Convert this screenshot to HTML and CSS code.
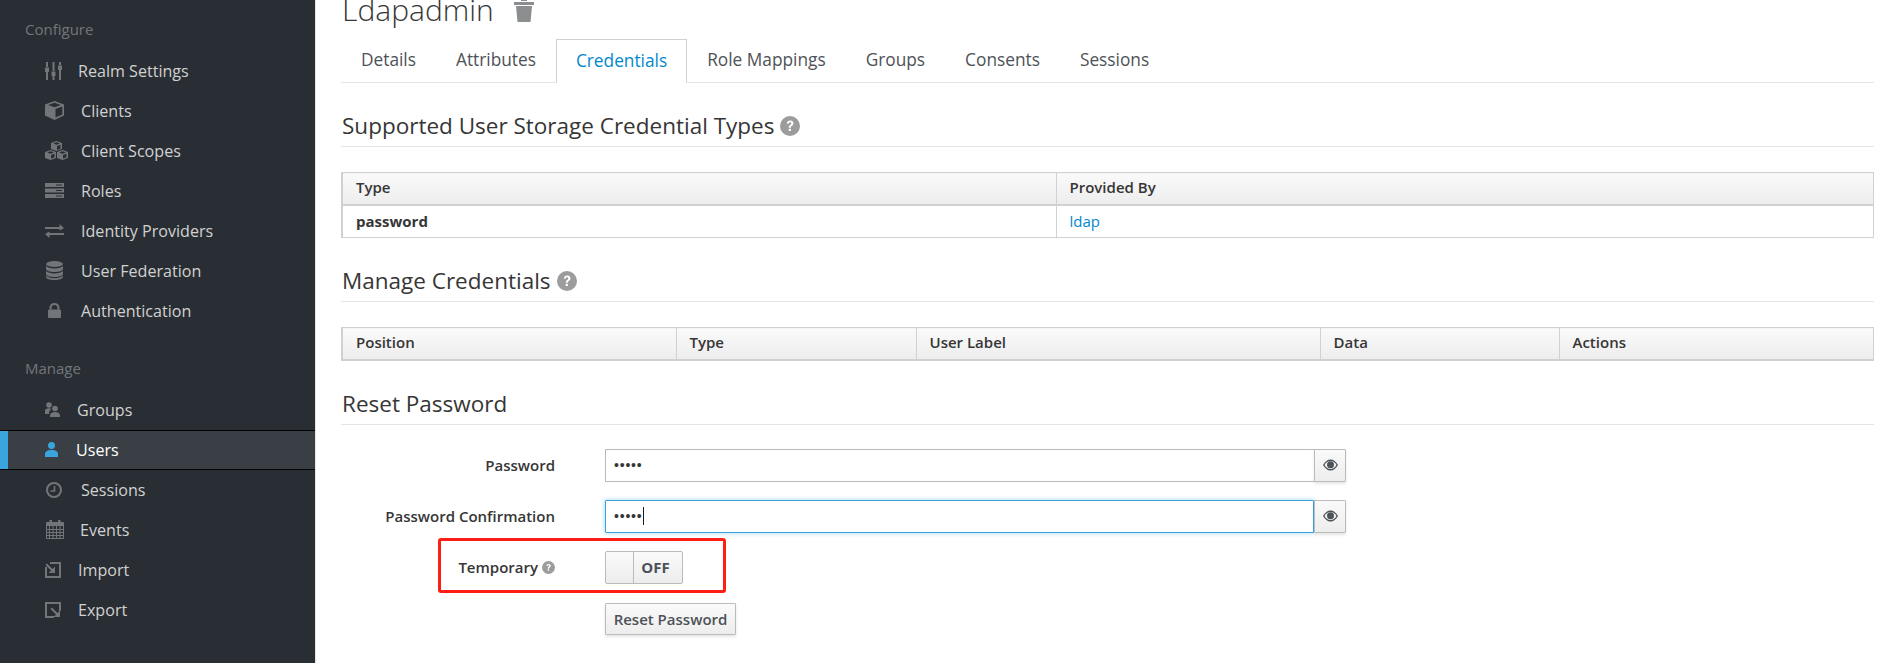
FILE: index.html
```html
<!DOCTYPE html>
<html lang="en">
<head>
<meta charset="utf-8">
<title>Ldapadmin</title>
<link rel="stylesheet" href="styles.css">
</head>
<body>
<div class="page">
  <aside class="sidebar">
    <div class="nav-title first">Configure</div>
    <ul class="nav">
      <li class="item"><span class="ico w33"><svg width="17" height="18" viewBox="0 0 17 18"><path d="M2 0v5M2 10v8M8.500 0v9M8.500 14v4M15 0v3M15 8v10" stroke="currentColor" stroke-width="2"/><path d="M0 5.500h4v4.500H0zM6.500 9.500h4V14h-4zM13 3.500h4V8h-4z" fill="currentColor"/></svg></span>Realm Settings</li>
      <li class="item"><span class="ico w36"><svg width="19" height="19" viewBox="0 0 19 19"><path d="M9.500 0 19 3.500v11L9.500 19 0 14.500v-11z" fill="currentColor"/><path d="M9.500 1.800 15.800 4 9.500 6.300 3.200 4z" fill="#292e34"/><path d="M10.500 8v8.600l6.800-3.200V5.500z" fill="#292e34"/></svg></span>Clients</li>
      <li class="item"><span class="ico w36"><svg width="23" height="19" viewBox="0 0 23 19"><path d="M11.500 0 17 2v6l-5.500 2L6 8V2z M5.500 9 11 11v6l-5.500 2L0 17v-6z M17.500 9l5.500 2v6l-5.500 2L12 17v-6z" fill="currentColor"/><path d="M11.500 1.300 14.800 2.500 11.500 3.700 8.200 2.500z M5.500 10.300 8.800 11.500 5.500 12.700 2.200 11.500z M17.500 10.300l3.300 1.200-3.300 1.200-3.300-1.200z" fill="#292e34"/><path d="M12 5v4l3.500-1.300V3.700z M6 14v3.500l3.500-1.300v-3.500z M18 14v3.500l3.500-1.300v-3.500z" fill="#292e34"/></svg></span>Client Scopes</li>
      <li class="item"><span class="ico w36"><svg width="19" height="15" viewBox="0 0 19 15"><path d="M0 0h19v4H0zM0 5.500h19v4H0zM0 11h19v4H0z" fill="currentColor"/><path d="M11 1.500h6v1h-6zM11 7h6v1h-6zM11 12.500h6v1h-6z" fill="#292e34"/></svg></span>Roles</li>
      <li class="item"><span class="ico w36"><svg width="19" height="14" viewBox="0 0 19 14"><path d="M0 3h14.500V0L19 4.300 14.500 6.500V5H0zM19 9H4.500V7.500L0 10l4.500 4v-3H19z" fill="currentColor"/></svg></span>Identity Providers</li>
      <li class="item db"><span class="ico w35"><svg width="17" height="19" viewBox="0 0 17 19"><ellipse cx="8.500" cy="3" rx="8.500" ry="3" fill="currentColor"/><path d="M0 5v3c0 1.700 3.800 3 8.500 3S17 9.700 17 8V5c-1.500 1.700-4.800 2.400-8.500 2.400S1.500 6.700 0 5zM0 10v3c0 1.700 3.800 3 8.500 3S17 14.700 17 13v-3c-1.500 1.700-4.800 2.400-8.500 2.400S1.500 11.700 0 10z" fill="currentColor"/><path d="M0 14.800V16c0 1.700 3.800 3 8.500 3s8.500-1.300 8.500-3v-1.200c-1.500 1.700-4.800 2.400-8.500 2.400S1.500 16.500 0 14.800z" fill="currentColor"/></svg></span>User Federation</li>
      <li class="item"><span class="ico w33 shift"><svg width="13" height="15" viewBox="0 0 13 15"><path d="M1.500 6.500V4.500a5 4.500 0 0 1 10 0v2h-2.200v-2a2.800 2.500 0 0 0-5.600 0v2z" fill="currentColor"/><rect y="6.500" width="13" height="8.500" rx="1" fill="currentColor"/></svg></span>Authentication</li>
    </ul>
    <div class="nav-title">Manage</div>
    <ul class="nav">
      <li class="item"><span class="ico w32"><svg width="15" height="15" viewBox="0 0 15 15"><circle cx="4" cy="3" r="2.800" fill="currentColor"/><path d="M0 12V9c0-2 1.500-2.800 4-2.800 1 0 1.800.2 2.300.5C5 8 4 9.500 4 12z" fill="currentColor"/><circle cx="10" cy="6.500" r="2.800" fill="currentColor"/><path d="M5 15v-1.500c0-2.200 2-3.500 5-3.500s5 1.300 5 3.500V15z" fill="currentColor"/></svg></span>Groups</li>
      <li class="item active"><span class="ico w31"><svg width="13" height="15" viewBox="0 0 13 15"><circle cx="6.500" cy="3.500" r="3.500" fill="currentColor"/><path d="M0 15v-3c0-2.500 2.500-4 6.500-4s6.500 1.500 6.500 4v3z" fill="currentColor"/></svg></span>Users</li>
      <li class="item"><span class="ico w36 db"><svg width="16" height="16" viewBox="0 0 16 16"><circle cx="8" cy="8" r="7" fill="none" stroke="currentColor" stroke-width="2"/><path d="M8.500 4v5H4.500" fill="none" stroke="currentColor" stroke-width="1.600"/></svg></span>Sessions</li>
      <li class="item"><span class="ico w35 db"><svg width="18" height="19" viewBox="0 0 18 19"><path d="M.5 2.500h17v16H.5z" fill="none" stroke="currentColor"/><path d="M0 3h18v3H0z" fill="currentColor"/><path d="M3.500 0h2.500v4H3.500zM12 0h2.500v4H12z" fill="currentColor"/><path d="M0 9.500h18M0 12.500h18M0 15.500h18M3.500 6v12M7 6v12M10.500 6v12M14 6v12" stroke="currentColor" fill="none"/></svg></span>Events</li>
      <li class="item"><span class="ico w33"><svg width="16" height="16" viewBox="0 0 16 16"><path d="M1 5v10h14V1H5" fill="none" stroke="currentColor" stroke-width="2"/><path d="M2 1.500 7.500 7 10 4.500V11H3.500L6 8.500.5 3z" fill="currentColor"/></svg></span>Import</li>
      <li class="item"><span class="ico w33"><svg width="16" height="16" viewBox="0 0 16 16"><path d="M15 9V1H1v14h8" fill="none" stroke="currentColor" stroke-width="2"/><path d="M1.500 0 7 5.500 9.500 3v6.500H3L5.500 7 0 1.500z" fill="currentColor" transform="translate(5.500 5.500)"/></svg></span>Export</li>
    </ul>
  </aside>
  <main class="main">
    <div class="title-row">
      <span class="title">Ldapadmin</span>
      <svg class="trash" width="20" height="23" viewBox="0 0 20 23"><path d="M7 0h6v2H7zM0 3h20v3H0z" fill="#8b8d8f"/><path d="M2 7h16l-1.500 16h-13z" fill="#8b8d8f"/></svg>
    </div>
    <nav class="tabs">
      <a class="tab">Details</a>
      <a class="tab">Attributes</a>
      <a class="tab on">Credentials</a>
      <a class="tab">Role Mappings</a>
      <a class="tab">Groups</a>
      <a class="tab">Consents</a>
      <a class="tab">Sessions</a>
    </nav>

    <h2 class="heading">Supported User Storage Credential Types <svg class="help" width="20" height="20" viewBox="0 0 20 20"><circle cx="10" cy="10" r="10" fill="#9c9c9c"/><path class="q" d="M6.800 7.500C7 5.500 8.300 4.500 10.200 4.500c2 0 3.300 1.200 3.300 2.800 0 2.500-2.700 2.500-2.700 4.500H8.700c0-3 2.500-2.900 2.500-4.400 0-.7-.4-1.100-1.100-1.100-.8 0-1.200.5-1.300 1.500zM8.700 12.800h2.200V15H8.700z"/></svg></h2>
    <table class="grid">
      <colgroup><col class="c-type"><col></colgroup>
      <thead><tr><th>Type</th><th>Provided By</th></tr></thead>
      <tbody><tr><td class="strong">password</td><td><a class="link">ldap</a></td></tr></tbody>
    </table>

    <h2 class="heading">Manage Credentials <svg class="help" width="20" height="20" viewBox="0 0 20 20"><circle cx="10" cy="10" r="10" fill="#9c9c9c"/><path class="q" d="M6.800 7.500C7 5.500 8.300 4.500 10.200 4.500c2 0 3.300 1.200 3.300 2.800 0 2.500-2.700 2.500-2.700 4.500H8.700c0-3 2.500-2.900 2.500-4.400 0-.7-.4-1.100-1.100-1.100-.8 0-1.200.5-1.300 1.500zM8.700 12.800h2.200V15H8.700z"/></svg></h2>
    <table class="grid">
      <colgroup><col class="c-pos"><col class="c-t2"><col class="c-label"><col class="c-data"><col></colgroup>
      <thead><tr><th>Position</th><th>Type</th><th>User Label</th><th>Data</th><th>Actions</th></tr></thead>
    </table>

    <h2 class="heading">Reset Password</h2>
    <form class="form">
      <div class="label">Password</div>
      <div class="group">
        <div class="input">•••••</div>
        <button type="button" class="addon"><svg width="15" height="12" viewBox="0 0 15 12"><path d="M0 6c2-3.500 4.500-5.500 7.500-5.500S13 2.500 15 6c-2 3.500-4.500 5.500-7.500 5.500S2 9.500 0 6z" fill="#4d5258"/><path d="M1.500 6C3 3.500 5 2 7.500 2s4.500 1.500 6 4c-1.500 2.500-3.500 4-6 4s-4.500-1.500-6-4z" fill="#f3f3f3"/><circle cx="7.500" cy="5.800" r="3.500" fill="#4d5258"/></svg></button>
      </div>
      <div class="label">Password Confirmation</div>
      <div class="group">
        <div class="input focus">•••••<span class="caret"></span></div>
        <button type="button" class="addon"><svg width="15" height="12" viewBox="0 0 15 12"><path d="M0 6c2-3.500 4.500-5.500 7.500-5.500S13 2.500 15 6c-2 3.500-4.500 5.500-7.500 5.500S2 9.500 0 6z" fill="#4d5258"/><path d="M1.500 6C3 3.500 5 2 7.500 2s4.500 1.500 6 4c-1.500 2.500-3.500 4-6 4s-4.500-1.500-6-4z" fill="#f3f3f3"/><circle cx="7.500" cy="5.800" r="3.500" fill="#4d5258"/></svg></button>
      </div>
      <div class="label temp">Temporary <svg class="help-sm" width="13" height="13" viewBox="0 0 20 20"><circle cx="10" cy="10" r="10" fill="#9c9c9c"/><path class="q" d="M6.800 7.500C7 5.500 8.300 4.500 10.200 4.500c2 0 3.300 1.200 3.300 2.800 0 2.500-2.700 2.500-2.700 4.500H8.700c0-3 2.500-2.900 2.500-4.400 0-.7-.4-1.100-1.100-1.100-.8 0-1.200.5-1.300 1.500zM8.700 12.800h2.200V15H8.700z"/></svg></div>
      <div class="switch"><span class="knob"></span><span class="off">OFF</span></div>
      <div class="spacer"></div>
      <div class="actions"><button type="button" class="btn">Reset Password</button></div>
      <div class="highlight"></div>
    </form>
  </main>
</div>
</body>
</html>
```

FILE: styles.css
```css
* { box-sizing: border-box; }
html, body { margin: 0; height: 100%; overflow: hidden; }
body { font-family: "Open Sans", "Liberation Sans", sans-serif; font-size: 15px; color: #363636; background: #fff; }
.page { display: flex; height: 663px; }

.sidebar { width: 316px; flex: none; background: #292e34; border-right: 1px solid #e6e6e6; color: #d1d1d1; font-size: 16.100px; }
.nav-title { color: #72767b; font-size: 15px; line-height: 20px; padding-left: 25px; margin-top: 27px; }
.nav-title.first { margin-top: 19px; }
.nav { list-style: none; margin: 12px 0 0; padding: 0; }
.item { display: flex; align-items: center; height: 40px; padding-left: 45px; padding-bottom: 1px; }
.ico { display: flex; align-items: center; flex: none; color: #72767b; }
.w31 { width: 31px; } .w32 { width: 32px; } .w33 { width: 33px; } .w35 { width: 35px; } .w36 { width: 36px; }
.db svg { margin-left: 1px; }
.shift svg { margin-left: 3px; }
.shift { width: 36px; }
.item.db .ico { width: 36px; }
.active { background: #393f44; color: #fff; border-top: 1px solid #030303; border-bottom: 1px solid #030303; box-shadow: inset 8px 0 0 #39a5dc; }
.active .ico { color: #39a5dc; }

.main { flex: 1; min-width: 0; padding: 0 23px 0 25px; }
.title-row { display: flex; align-items: flex-start; height: 48px; margin-top: -9px; }
.title { font-size: 30px; font-weight: 300; line-height: 38px; margin-left: 1px; color: #363636; }
.trash { margin: 8px 0 0 20px; flex: none; }

.tabs { display: flex; height: 44px; border-bottom: 1px solid #e5e5e5; font-size: 17.300px; color: #4d5258; }
.tab { display: block; padding: 0 20px; line-height: 42px; margin-bottom: -1px; }
.tab.on { color: #0088ce; background: #fff; border: 1px solid #d1d1d1; border-bottom: 1px solid #fff; padding: 0 19px; }

.heading { margin: 23px 0 25px; height: 41px; font-size: 22.500px; font-weight: 400; line-height: 40px; color: #363636; border-bottom: 1px solid #e5e5e5; display: flex; align-items: center; gap: 6px; padding-left: 1px; }

.grid { width: 100%; table-layout: fixed; border-collapse: collapse; border: 1px solid #d1d1d1; border-left-width: 2px; font-size: 15px; }
.grid th { height: 32px; text-align: left; font-weight: 600; padding: 0 13px 2px; background: linear-gradient(#fafafa, #ededed); border: 1px solid #d1d1d1; border-width: 0 1px 2px 0; color: #363636; }
.grid td { height: 33px; padding: 0 13px 1px; border-right: 1px solid #d1d1d1; }
.strong { font-weight: 700; }
.link { color: #0088ce; }
.c-type { width: 714px; }
.c-pos { width: 334px; } .c-t2 { width: 240px; } .c-label { width: 404px; } .c-data { width: 239px; }
.q { fill: #fff; }

.form { position: relative; display: grid; grid-template-columns: 214px 741px; column-gap: 50px; grid-template-rows: 33px 33px 33px 32px; row-gap: 18px; margin-top: -1px; }
.label { display: flex; align-items: center; justify-content: flex-end; font-weight: 600; color: #363636; }
.temp { gap: 4px; }
.group { display: flex; }
.input { flex: 1; background: #fff; border: 1px solid #bababa; border-right: 0; border-radius: 1px 0 0 1px; padding-left: 8px; display: flex; align-items: center; font-size: 14px; font-family: "Liberation Sans", sans-serif; letter-spacing: .8px; color: #363636; }
.input.focus { border: 1px solid #39a5dc; box-shadow: 0 0 4px rgba(57,165,220,.5); }
.caret { width: 1px; height: 18px; background: #1a1a1a; margin-left: 0; }
.addon { width: 32px; padding: 0; display: flex; align-items: center; justify-content: center; background: linear-gradient(#fafafa, #ededed); border: 1px solid #bbb; border-radius: 0 1px 1px 0; box-shadow: 0 2px 3px rgba(3,3,3,.1); }
.switch { display: flex; width: 78px; height: 33px; border: 1px solid #bbb; border-radius: 2px; background: linear-gradient(#fafafa, #ededed); }
.knob { width: 28px; border-right: 1px solid #bbb; }
.off { flex: 1; padding-right: 5px; text-align: center; font-weight: 700; line-height: 30px; color: #4d5258; }
.spacer { min-height: 0; }
.actions { margin-top: 1px; }
.btn { height: 32px; width: 131px; padding: 0; font: 600 15px "Open Sans", "Liberation Sans", sans-serif; color: #4d5258; background: linear-gradient(#fafafa, #ededed); border: 1px solid #bbb; border-radius: 1px; box-shadow: 0 2px 3px rgba(3,3,3,.1); }
.highlight { position: absolute; left: 97px; top: 89px; width: 288px; height: 55px; border: 3px solid #ff1e14; border-radius: 3px; pointer-events: none; }
```
